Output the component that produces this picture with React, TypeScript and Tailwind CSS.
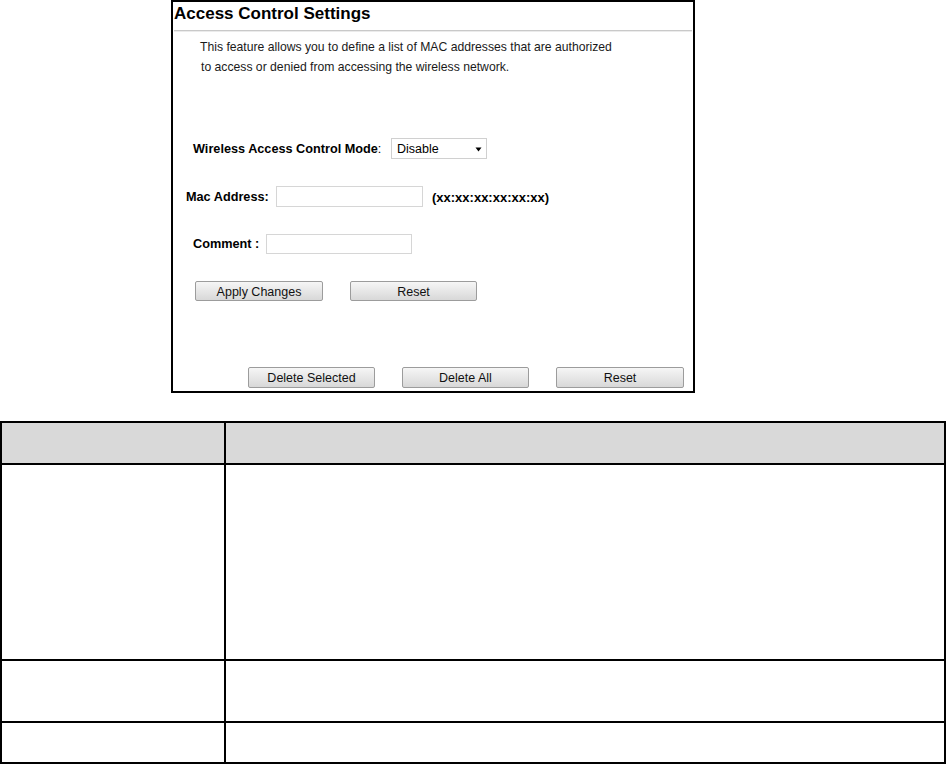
import React from 'react';

const font = { fontFamily: '"Liberation Sans", Arial, sans-serif' };

function Btn({ label, w }: { label: string; w: string }) {
  return (
    <button
      className={`${w} h-[21px] shrink-0 rounded-[2px] border border-[#9c9c9c] bg-gradient-to-b from-[#f6f6f6] to-[#d8d8d8] pt-[2px] text-[12.5px] leading-none text-[#111]`}
    >
      {label}
    </button>
  );
}

function Field({ w }: { w: string }) {
  return <div className={`${w} h-[21px] shrink-0 border border-[#d6d6d6] bg-white`} />;
}

export default function App() {
  return (
    <div className="w-[946px] h-[764px] overflow-hidden bg-white text-black" style={font}>
      {/* ── Screenshot panel ─────────────────────────── */}
      <div className="ml-[171px] w-[524px] h-[393px] border-2 border-black flex flex-col">
        <div className="pl-[1px] text-[17px] font-bold leading-[24px]">Access Control Settings</div>
        <div className="mx-[1px] mt-[4px] border-t border-b border-t-[#c9c9c9] border-b-[#ebebeb]" />

        <div className="mt-[5px] text-[12.2px] leading-[20px] text-[#1a1a1a]">
          <div className="pl-[27px]">This feature allows you to define a list of MAC addresses that are authorized</div>
          <div className="pl-[28px]">to access or denied from accessing the wireless network.</div>
        </div>

        {/* Mode */}
        <div className="mt-[61px] flex items-center h-[21px] pl-[20px] text-[12.7px]">
          <div className="w-[198px] shrink-0 pt-[2px]">
            <span className="font-bold">Wireless Access Control Mode</span>:
          </div>
          <div className="w-[96px] h-[21px] border border-[#d0d0d0] flex items-center justify-between pl-[5px] pr-[4px]">
            <span className="pt-[2px] text-[12.5px]">Disable</span>
            <svg width="7" height="5" viewBox="0 0 7 5" className="mt-[1px]">
              <path d="M0.5 0.5h6L3.5 4.5z" fill="#000" />
            </svg>
          </div>
        </div>

        {/* Mac address */}
        <div className="mt-[27px] flex items-center h-[21px] pl-[13px] text-[12.7px] font-bold">
          <div className="w-[90px] shrink-0 pt-[2px]">Mac Address:</div>
          <Field w="w-[147px]" />
          <div className="ml-[9px] pt-[2px] text-[13px]">(xx:xx:xx:xx:xx:xx)</div>
        </div>

        {/* Comment */}
        <div className="mt-[27px] flex items-center h-[20px] pl-[20px] text-[12.7px] font-bold">
          <div className="w-[73px] shrink-0 pt-[2px]">Comment :</div>
          <Field w="w-[146px] !h-[20px]" />
        </div>

        <div className="mt-[27px] flex gap-[27px] pl-[22px]">
          <Btn label="Apply Changes" w="w-[128px] !h-[20px]" />
          <Btn label="Reset" w="w-[127px] !h-[20px]" />
        </div>

        <div className="mt-auto mb-[3px] flex gap-[27px] pl-[75px]">
          <Btn label="Delete Selected" w="w-[127px]" />
          <Btn label="Delete All" w="w-[127px]" />
          <Btn label="Reset" w="w-[128px]" />
        </div>
      </div>

      {/* ── Parameter table ──────────────────────────── */}
      <div className="mt-[28px] grid grid-cols-[224px_1fr] border-t-2 border-l-2 border-black">
        <div className="h-[42px] bg-[#d9d9d9] border-r-2 border-b-2 border-black" />
        <div className="h-[42px] bg-[#d9d9d9] border-r-2 border-b-2 border-black" />
        <div className="h-[196px] border-r-2 border-b-2 border-black" />
        <div className="h-[196px] border-r-2 border-b-2 border-black" />
        <div className="h-[62px] border-r-2 border-b-2 border-black" />
        <div className="h-[62px] border-r-2 border-b-2 border-black" />
        <div className="h-[41px] border-r-2 border-b-2 border-black" />
        <div className="h-[41px] border-r-2 border-b-2 border-black" />
      </div>
    </div>
  );
}
